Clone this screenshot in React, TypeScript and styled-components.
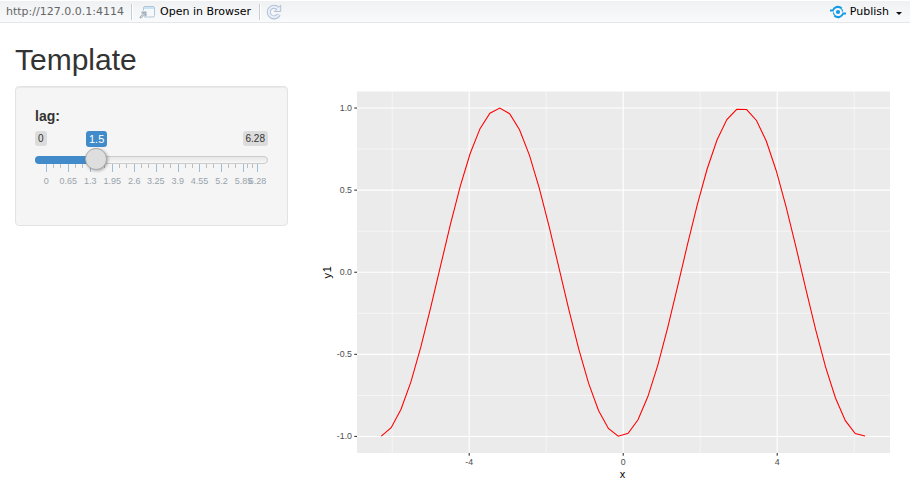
import React from "react";
import styled, { createGlobalStyle } from "styled-components";

const Global = createGlobalStyle`
  * { box-sizing: border-box; }
  body { margin: 0; background: #fff; overflow: hidden; color: #333;
    font-family: "Liberation Sans", Arial, sans-serif; }
`;

const Page = styled.div`width: 910px; height: 497px;`;

const Toolbar = styled.header`
  height: 23px; display: flex; align-items: center;
  padding: 1px 6px 0;
  background: linear-gradient(#fff 0 1px, #eff1f3 1px, #f9fafb 22px);
  border-bottom: 1px solid #e4e6e8;
  font: 11px/22px "DejaVu Sans", sans-serif; color: #000;
`;
const Address = styled.span`flex: none; width: 125px; color: #666; white-space: nowrap;`;
const Divider = styled.i<{ $gap: number }>`
  flex: none; width: 2px; height: 16px; margin-right: ${(p) => p.$gap}px;
  border-left: 1px solid #c9cdd0; border-right: 1px solid #fff;
`;
const ToolButton = styled.button<{ $gap: number }>`
  display: flex; align-items: center; gap: ${(p) => p.$gap}px;
  padding: 0; border: 0; background: none; font: inherit; color: inherit; white-space: nowrap;
`;
const OpenButton = styled(ToolButton)`width: 120px;`;
const Spacer = styled.div`flex: 1;`;
const Caret = styled.i`
  margin: 3px 2px 0 7px;
  border: 3px solid transparent; border-top-color: #111; border-bottom: 0;
`;

const Title = styled.h2`
  margin: 20px 0 0 15px; height: 43px;
  font-size: 30px; line-height: 33px; font-weight: 400; color: #333;
`;
const Content = styled.main`display: flex; padding-left: 15px;`;
const Panel = styled.section`
  width: 273px; height: 140px; padding: 19px;
  background: #f5f5f5; border: 1px solid #e3e3e3; border-radius: 4px;
  box-shadow: inset 0 1px 1px rgba(0, 0, 0, .05);
`;
const Label = styled.label`
  display: block; height: 25px; font-size: 14px; line-height: 20px; font-weight: 700;
`;
const Slider = styled.div`position: relative; width: 233px; height: 60px;`;
const Tag = styled.span<{ $active?: boolean }>`
  padding: 1px 3px;
  height: ${(p) => (p.$active ? 16 : 15)}px;
  border-radius: 3px;
  font-size: ${(p) => (p.$active ? 11 : 10)}px;
  line-height: ${(p) => (p.$active ? 15 : 13)}px;
  color: ${(p) => (p.$active ? "#fff" : "#333")};
  background: ${(p) => (p.$active ? "#428bca" : "rgba(0, 0, 0, .1)")};
`;
const Limits = styled.div`display: flex; justify-content: space-between;`;
const CurrentTag = styled(Tag)`position: absolute; left: 51px; top: 0;`;
const Track = styled.div`
  margin-top: 10px; height: 8px; border: 1px solid #ccc; border-radius: 8px;
  background: linear-gradient(#dedede -50%, #fff 150%);
`;
const Fill = styled.div`
  position: absolute; left: 0; top: 25px; width: 61px; height: 8px;
  border-radius: 8px 0 0 8px; background: #428bca;
`;
const Handle = styled.div`
  position: absolute; left: 50px; top: 17px; width: 22px; height: 22px;
  border: 1px solid #ababab; border-radius: 50%; background: #dedede;
  box-shadow: 1px 1px 3px rgba(0, 0, 0, .3);
`;
const Scale = styled.svg`display: block; overflow: visible;`;
const ScaleText = styled.text`font-size: 9px; fill: #99a4ac; text-anchor: middle;`;

const Plot = styled.svg`display: block; margin-left: 15px; overflow: visible;`;
const AxisText = styled.text`font-size: 8.8px; fill: #4d4d4d;`;
const AxisTitle = styled.text<{ $spacing?: number }>`
  font-size: 11px; fill: #000; text-anchor: middle; letter-spacing: ${(p) => p.$spacing ?? 0}px;
`;

const ticks = [
  [11.5, "0"], [33.5, "0.65"], [55.5, "1.3"], [77.5, "1.95"], [99.5, "2.6"], [121, "3.25"],
  [143, "3.9"], [164.8, "4.55"], [186.8, "5.2"], [208.8, "5.85"], [222.8, "6.28"],
] as const;
const smallTicks = [
  ...ticks.slice(0, 9).flatMap(([x]) => [Math.floor(x) + 7.5, Math.floor(x) + 14.5]), 212.5, 217.5,
];

const px = (x: number) => 623.2 + x * 38.5;
const py = (y: number) => 272.25 - y * 164.2;
const curve = Array.from({ length: 50 }, (_, i) => {
  const x = -2 * Math.PI + (i * 4 * Math.PI) / 49;
  return `${px(x).toFixed(2)},${py(Math.sin(x - 1.5)).toFixed(2)}`;
}).join(" ");

function WindowIcon() {
  return (
    <svg width="17" height="16" viewBox="0 0 17 16" fill="none">
      <rect x="4.5" y="2.5" width="11" height="10.5" rx="1.5" fill="#f5f9fb" stroke="#b3c5d2" />
      <path d="M5 4h10" stroke="#c8e3f4" strokeWidth="2" />
      <path d="M1.5 13.5 6 9M2.5 8.5h4v4" stroke="#f4f6f8" strokeWidth="4" />
      <path d="M1 14 6 9M2.5 8.5h4v4" stroke="#a4b0bb" strokeWidth="2" />
      <path d="M1.8 13.2 5.5 9.5" stroke="#e1e8ed" strokeWidth=".8" />
    </svg>
  );
}

function ReloadIcon() {
  return (
    <svg width="16" height="16" viewBox="0 0 16 16" fill="none">
      <path d="M12 4.6A5.3 5.3 0 1 0 12.8 10.5" stroke="#b2c0d2" strokeWidth="4" />
      <path d="M14.7 1.2v6.3H8.4z" fill="#e7effa" stroke="#b2c0d2" />
      <path d="M12.2 4.6A5.3 5.3 0 1 0 12.6 10.8" stroke="#e7effa" strokeWidth="2.1" />
    </svg>
  );
}

function PublishIcon() {
  return (
    <svg width="16" height="14" viewBox="0 0 16 14" fill="none" stroke="#139be5">
      <circle cx="8" cy="7" r="2.1" fill="#139be5" stroke="none" />
      <path d="M0 5.5h2.8C4.2 1.8 8.5 .8 11.6 3.2M16 8.5h-2.8C11.8 12.2 7.5 13.2 4.4 10.8" strokeWidth="2" />
      <path d="M3.4 7.4Q3.6 9.4 5 10.6M12.6 6.6Q12.4 4.6 11 3.4" strokeWidth="1.1" />
    </svg>
  );
}

export default function App() {
  return (
    <Page>
      <Global />
      <Toolbar>
        <Address>http://127.0.0.1:4114</Address>
        <Divider $gap={6} />
        <OpenButton $gap={4}><WindowIcon />Open in Browser</OpenButton>
        <Divider $gap={5} />
        <ToolButton $gap={0} aria-label="Reload"><ReloadIcon /></ToolButton>
        <Spacer />
        <ToolButton $gap={4}><PublishIcon />Publish</ToolButton>
        <Caret />
      </Toolbar>
      <Title>Template</Title>
      <Content>
        <Panel>
          <Label>lag:</Label>
          <Slider>
            <Limits><Tag>0</Tag><Tag>6.28</Tag></Limits>
            <Track />
            <Fill />
            <CurrentTag $active>1.5</CurrentTag>
            <Scale width="233" height="27">
              {smallTicks.map((x) => <path key={x} d={`M${x} 0v4`} stroke="#b9bdc0" />)}
              {ticks.map(([x, label]) => (
                <g key={label}>
                  <path d={`M${Math.floor(x) + 0.5} 0v8`} stroke="#9abfdd" />
                  <ScaleText x={x - 0.3} y="20">{label}</ScaleText>
                </g>
              ))}
            </Scale>
            <Handle />
          </Slider>
        </Panel>
        <Plot width="592" height="411" viewBox="303 86 592 411">
          <rect x="357" y="91.5" width="533" height="361.5" fill="#ebebeb" />
          <g stroke="#fff" strokeWidth=".55">
            {[-0.75, -0.25, 0.25, 0.75].map((v) => <path key={v} d={`M357 ${py(v)}H890`} />)}
            {[-6, -2, 2, 6].map((v) => <path key={v} d={`M${px(v)} 91.5V453`} />)}
          </g>
          <g stroke="#fff" strokeWidth="1.07">
            {[-1, -0.5, 0, 0.5, 1].map((v) => <path key={v} d={`M357 ${py(v)}H890`} />)}
            {[-4, 0, 4].map((v) => <path key={v} d={`M${px(v)} 91.5V453`} />)}
          </g>
          <polyline points={curve} fill="none" stroke="#f00" strokeWidth="1.07" />
          {[-1, -0.5, 0, 0.5, 1].map((v) => (
            <g key={v}>
              <path d={`M354.3 ${py(v)}H357`} stroke="#333" strokeWidth="1.07" />
              <AxisText x="352" y={py(v) + 3} textAnchor="end">{v.toFixed(1)}</AxisText>
            </g>
          ))}
          {[-4, 0, 4].map((v) => (
            <g key={v}>
              <path d={`M${px(v)} 453v2.7`} stroke="#333" strokeWidth="1.07" />
              <AxisText x={px(v)} y="465" textAnchor="middle">{v}</AxisText>
            </g>
          ))}
          <AxisTitle x="622.5" y="478">x</AxisTitle>
          <AxisTitle $spacing={0.6} transform="translate(331 272) rotate(-90)">y1</AxisTitle>
        </Plot>
      </Content>
    </Page>
  );
}
